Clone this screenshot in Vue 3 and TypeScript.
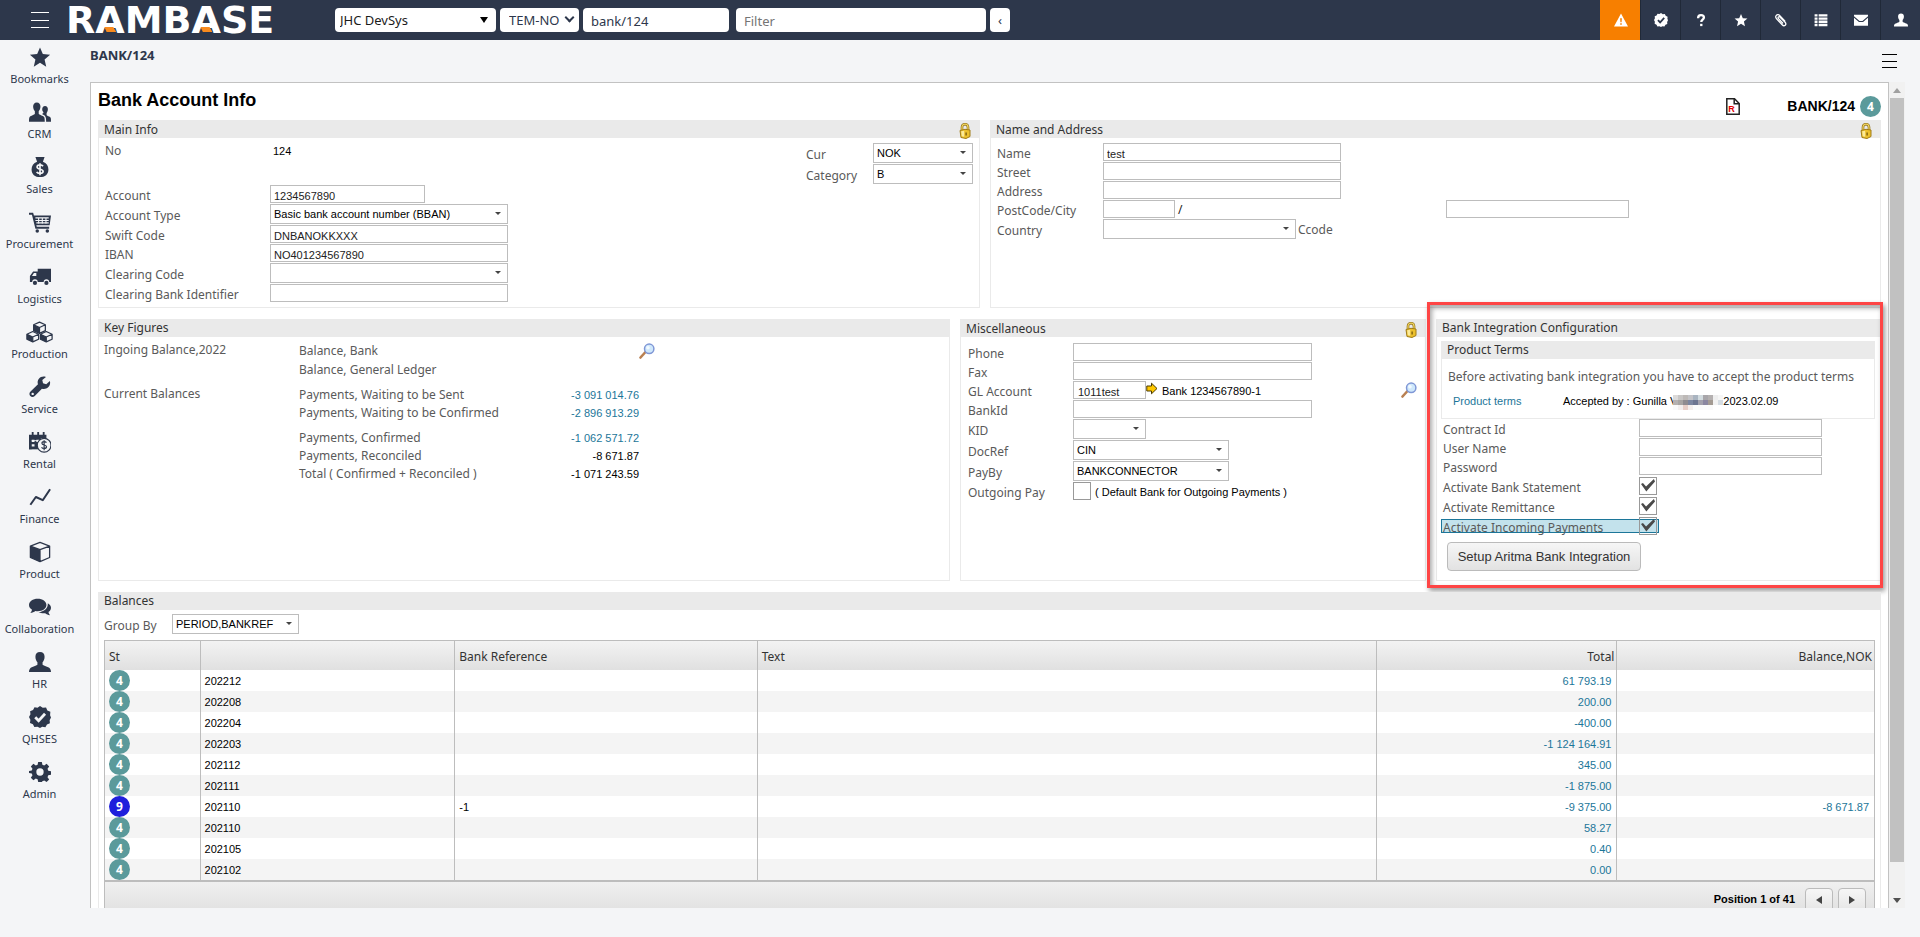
<script setup lang="ts">
import { ref } from 'vue'

interface Field {
  id: string
  label: string
  kind: 'text' | 'select' | 'check'
  value?: string
  size: string
  checked?: boolean
  active?: boolean
}

interface BalanceRow {
  st: number
  period: string
  bankRef?: string
  total: string
  balance?: string
}

const modules: string[] = [
  'Bookmarks', 'CRM', 'Sales', 'Procurement', 'Logistics', 'Production', 'Service',
  'Rental', 'Finance', 'Product', 'Collaboration', 'HR', 'QHSES', 'Admin',
]

const tools: string[] = ['alert', 'verified', 'help', 'star', 'clip', 'list', 'mail', 'user']

const accountFields = ref<Field[]>([
  { id: 'account', label: 'Account', kind: 'text', value: '1234567890', size: 'w155' },
  { id: 'account-type', label: 'Account Type', kind: 'select', value: 'Basic bank account number (BBAN)', size: 'w238' },
  { id: 'swift', label: 'Swift Code', kind: 'text', value: 'DNBANOKKXXX', size: 'w238' },
  { id: 'iban', label: 'IBAN', kind: 'text', value: 'NO401234567890', size: 'w238' },
  { id: 'clearing', label: 'Clearing Code', kind: 'select', value: '', size: 'w238' },
  { id: 'clearing-id', label: 'Clearing Bank Identifier', kind: 'text', value: '', size: 'w238' },
])

const classFields = ref<Field[]>([
  { id: 'cur', label: 'Cur', kind: 'select', value: 'NOK', size: 'w100' },
  { id: 'category', label: 'Category', kind: 'select', value: 'B', size: 'w100' },
])

const addressFields = ref<Field[]>([
  { id: 'name', label: 'Name', kind: 'text', value: 'test', size: 'w238' },
  { id: 'street', label: 'Street', kind: 'text', value: '', size: 'w238' },
  { id: 'address', label: 'Address', kind: 'text', value: '', size: 'w238' },
])

const integrationFields = ref<Field[]>([
  { id: 'contract', label: 'Contract Id', kind: 'text', value: '', size: 'w183' },
  { id: 'user', label: 'User Name', kind: 'text', value: '', size: 'w183' },
  { id: 'password', label: 'Password', kind: 'text', value: '', size: 'w183' },
])

const activations = ref<Field[]>([
  { id: 'statement', label: 'Activate Bank Statement', kind: 'check', size: '', checked: true },
  { id: 'remittance', label: 'Activate Remittance', kind: 'check', size: '', checked: true },
  { id: 'incoming', label: 'Activate Incoming Payments', kind: 'check', size: '', checked: true, active: true },
])

const outgoing = ref(false)

const balances: BalanceRow[] = [
  { st: 4, period: '202212', total: '61 793.19' },
  { st: 4, period: '202208', total: '200.00' },
  { st: 4, period: '202204', total: '-400.00' },
  { st: 4, period: '202203', total: '-1 124 164.91' },
  { st: 4, period: '202112', total: '345.00' },
  { st: 4, period: '202111', total: '-1 875.00' },
  { st: 9, period: '202110', bankRef: '-1', total: '-9 375.00', balance: '-8 671.87' },
  { st: 4, period: '202110', total: '58.27' },
  { st: 4, period: '202105', total: '0.40' },
  { st: 4, period: '202102', total: '0.00' },
]

const mosaic: string[] = [
  '#dcdad9', '#c9c7c6', '#bdb9b7', '#c4c4c8', '#a9b4c0', '#d3dce0', '#a8a6aa', '#b4b0b0', '#eeeeee', '#f6f6f6',
  '#b5b1b0', '#a8a5a3', '#8f8c90', '#7c86a0', '#6d7590', '#a2a0ac', '#8a86a0', '#a39a92', '#f2f2f2', '#d5dce2',
  '#fafafa', '#f3efee', '#e8cfc8', '#f4eeec', '#fbfbfb', '#fafafa', '#fbfbfb', '#fafafa', '#ffffff', '#ffffff',
]
</script>

<template>
  <div class="app">
    <svg class="defs" aria-hidden="true">
      <symbol id="i-star" viewBox="0 0 24 24"><path d="M12 1.5l3.1 7.3 7.9.7-6 5.2 1.8 7.8-6.8-4.1-6.8 4.1L7 14.700 1 9.500l7.900-.7z" /></symbol>
      <symbol id="i-Bookmarks" viewBox="0 0 24 24"><path d="M12 1.500l3.100 7.300 7.900.7-6 5.200 1.800 7.800-6.800-4.100-6.800 4.100L7 14.700 1 9.500l7.900-.7z" /></symbol>
      <symbol id="i-CRM" viewBox="0 0 24 24"><path d="M8.500 1.500c2.600 0 4 1.900 4 4.500 0 2-.8 4-1.900 5.100v2.700c0 1 4.900 2.200 5.900 3.600.5.800.7 2.600.7 5.100H0c0-2.500.1-4.300.7-5.100 1-1.400 5.700-2.600 5.700-3.600v-2.700C5.300 10 4.500 8 4.500 6c0-2.600 1.400-4.500 4-4.500z" /><path d="M17.500 5.500c2 0 3.100 1.500 3.100 3.600 0 1.600-.6 3.100-1.400 4v2.300c0 .9 3.700 1.700 4.400 2.800.4.700.4 2.300.4 4.300h-5.300c0-2.600-.2-4.600-.9-5.700-.8-1.200-2.500-2-3.600-2.600l1.500-1v-.9c-.8-.8-1.300-1.600-1.300-3.200 0-2.100 1.100-3.600 3.100-3.600z" /></symbol>
      <symbol id="i-Sales" viewBox="0 0 24 24"><path d="M7 1h10l-1.800 5.200c4 1.300 6 4.500 6 8.400 0 5.200-3.800 8.400-9.200 8.400s-9.200-3.200-9.200-8.400c0-3.900 2-7.100 6-8.400z" /><path d="M15.300 11.200c-.6-1-1.700-1.500-3.300-1.500-2 0-3.200.8-3.200 2.300 0 3.300 6.600 1.500 6.600 4.700 0 1.500-1.300 2.400-3.400 2.400-1.800 0-3.100-.6-3.600-1.800M12 8v13" class="cut" /></symbol>
      <symbol id="i-Procurement" viewBox="0 0 24 24"><path d="M0 2h4.500l.9 3H24l-1.500 10.500H8l.5 1.800H22v2H7L3.200 4H0z" /><circle cx="9" cy="21.700" r="1.900" /><circle cx="20" cy="21.700" r="1.900" /><path d="M7 7.500h14.500M7 10.300h14.500M8 13h13.500M10.500 7v7M14.500 7v7M18.500 7v7" class="grid-cut" /></symbol>
      <symbol id="i-Logistics" viewBox="0 0 24 24"><path d="M9.500 3H24v14.500h-2a3 3 0 0 0-6 0H9.500a3 3 0 0 0-6 0H1V11l3.500-5h5z" /><circle cx="6.500" cy="18.500" r="2.300" /><circle cx="19" cy="18.500" r="2.300" /><path d="M5.400 7.500H8V11H3.200z" class="hole" /></symbol>
      <symbol id="i-Production" viewBox="0 0 30 24"><g class="box-line"><path d="M15 1l6.500 3v6.500L15 13.500l-6.500-3V4zM8.500 4L15 7l6.500-3M15 7v6.500" /><path d="M7.500 11.500l6.500 3V20l-6.500 3L1 20v-5.500zM1 14.500l6.500 3 6.500-3M7.500 17.500V23" /><path d="M22.500 11.500l6.500 3V20l-6.500 3-6.500-3v-5.500zM16 14.500l6.500 3 6.500-3M22.500 17.500V23" /></g><path d="M8.500 4L15 7v6.500l-6.500-3zM1 14.500l6.500 3V23L1 20zM16 14.500l6.500 3V23L16 20z" /></symbol>
      <symbol id="i-Service" viewBox="0 0 24 24"><path d="M22.800 5.500l-4 3.500-3.500-1.200-.8-3.500 4-3.200c-3-1-6-.2-7.700 1.800-1.500 1.800-1.700 4-1 6.200L1.700 17c-1.600 1.500-1.500 3.500-.3 4.900 1.300 1.400 3.400 1.500 4.900 0l7.800-8.100c2.300.7 5 .3 6.800-1.400 1.900-1.800 2.600-4.400 1.900-6.900z" /><circle cx="4" cy="19.500" r="1.300" class="hole" /></symbol>
      <symbol id="i-Rental" viewBox="0 0 24 24"><path d="M0 4h3V1h2v3h4V1h2v3h4V1h2v3h2v6H0zM0 10h3v10H0z" /><path d="M0 11h12v9H0z" /><path d="M3 9.500h3V12H3zM8 9.500h3V12H8zM3 14.500h3V17H3zM13 7.500h3V9h-3z" class="hole" /><circle cx="16.500" cy="15.500" r="7.500" class="coin" /><path d="M19 12.700c-.5-.8-1.300-1.100-2.500-1.100-1.500 0-2.400.7-2.400 1.800 0 2.500 5 1.300 5 3.800 0 1.200-1 1.900-2.600 1.900-1.400 0-2.400-.5-2.800-1.400M16.500 10v11" class="pen" /></symbol>
      <symbol id="i-Finance" viewBox="0 0 24 24"><path d="M1.500 20.500l6-8.500 7.500 3.500 8-12" class="trend" /></symbol>
      <symbol id="i-Product" viewBox="0 0 24 24"><path d="M12 1.500l10.500 4v12.500L12 22.500 1.500 18V5.500zM1.500 5.500l10.500 4 10.500-4M12 9.500v13" class="box-line" /><path d="M1.500 5.500l10.500 4v13L1.500 18z" /></symbol>
      <symbol id="i-Collaboration" viewBox="0 0 24 24"><path d="M9.500 3C14.800 3 19 6 19 9.800s-4.200 6.800-9.500 6.800c-.9 0-1.700-.1-2.500-.2-1.500 1.200-3.300 1.900-5.600 2 1-.9 1.700-2 1.900-3.300C1.300 13.800 0 11.900 0 9.800 0 6 4.200 3 9.500 3z" /><path d="M20.500 7.800c2.200 1.200 3.500 3 3.500 5 0 1.900-1.100 3.500-2.800 4.600.2 1.300.8 2.600 1.800 3.600-2.200-.2-4-1-5.300-2.200-2.900.3-5.500-.4-7.300-1.300 6-.3 10.600-4.100 10.100-9.700z" /></symbol>
      <symbol id="i-HR" viewBox="0 0 24 24"><path d="M12 1c3.300 0 5 2.200 5 5.200 0 2.500-.9 4.500-2.200 6v2.600c0 1.300 6.500 2.400 8 4.200.7.800 1.200 2 1.200 4H0c0-2 .5-3.200 1.200-4 1.500-1.800 8-2.900 8-4.200v-2.600C7.900 10.700 7 8.700 7 6.200 7 3.200 8.700 1 12 1z" /></symbol>
      <symbol id="i-user" viewBox="0 0 24 24"><path d="M12 1c3.300 0 5 2.200 5 5.200 0 2.500-.9 4.500-2.200 6v2.600c0 1.300 6.500 2.400 8 4.200.7.800 1.200 2 1.200 4H0c0-2 .5-3.200 1.200-4 1.500-1.800 8-2.900 8-4.200v-2.600C7.900 10.700 7 8.700 7 6.200 7 3.200 8.700 1 12 1z" /></symbol>
      <symbol id="i-QHSES" viewBox="0 0 24 24"><path d="M12 0l3 2 3.600-.4 1.400 3.300 3.300 1.400L23 10l1 2.500-1.500 3 .3 3.400-3.200 1.300-1.700 3-3.500-.5L12 24l-2.700-1.400-3.500.4-1.500-3-3.200-1.400.4-3.500L0 12l1.600-3-.4-3.400 3.200-1.300L6 1.400l3.300.5z" /><path d="M6.800 12.200l3.700 3.900 7-7.600" class="tick" /></symbol>
      <symbol id="i-verified" viewBox="0 0 24 24"><path d="M12 0l3 2 3.600-.4 1.400 3.300 3.300 1.400L23 10l1 2.500-1.500 3 .3 3.400-3.200 1.300-1.700 3-3.500-.5L12 24l-2.700-1.400-3.500.4-1.500-3-3.200-1.400.4-3.500L0 12l1.600-3-.4-3.400 3.200-1.300L6 1.400l3.300.5z" /><path d="M6.800 12.200l3.700 3.900 7-7.600" class="tick" /></symbol>
      <symbol id="i-Admin" viewBox="0 0 24 24"><path fill-rule="evenodd" d="M10 1h4l.6 3.100 2 .8 2.600-1.800 2.800 2.800-1.800 2.600.8 2 3 .6v3.900l-3 .6-.8 2 1.800 2.600-2.800 2.800-2.600-1.800-2 .8L14 23h-4l-.6-3-2-.8L4.800 21 2 18.200l1.800-2.600-.8-2-3-.6V11l3-.6.8-2L2 5.900l2.800-2.800 2.600 1.800 2-.8zM12 8a4 4 0 1 0 0 8 4 4 0 0 0 0-8z" /></symbol>
      <symbol id="i-alert" viewBox="0 0 24 24"><path fill-rule="evenodd" d="M12 1l12 22H0zM10.500 9l.5 7h2l.500-7zM10.700 17.500V20h2.600v-2.500z" /></symbol>
      <symbol id="i-help" viewBox="0 0 24 24"><path d="M7 9C7 5 9 3.500 12 3.500c3 0 5 1.500 5 4.300 0 3.700-4.500 3.700-4.500 7.700" class="mark" /><path d="M10.500 18.500h4v4h-4z" /></symbol>
      <symbol id="i-clip" viewBox="0 0 24 24"><path d="M18.500 13.500L10 4.500C8 2.500 5.500 2.300 4 4S2.700 8 4.500 10l9.500 10.200c1.500 1.600 3.800 2 5.200.7s1.200-3.400-.2-5L10.500 7.200c-1-1-2.200-1.200-3-.4s-.6 1.900.3 2.900l7 7.500" class="wire" /></symbol>
      <symbol id="i-list" viewBox="0 0 24 24"><path d="M1 2h5v4H1zM8 2h15v4H8zM1 7.500h5v4H1zM8 7.500h15v4H8zM1 13h5v4H1zM8 13h15v4H8zM1 18.500h5v4H1zM8 18.500h15v4H8z" /></symbol>
      <symbol id="i-mail" viewBox="0 0 24 24"><path d="M0 3h24v2.500l-9.500 8h-5L0 5.500zM0 8l8.500 7.300h7L24 8v14H0z" /></symbol>
      <symbol id="i-lock" viewBox="0 0 12 16"><path d="M3 7.500V4.300C3 2.300 4.200 1.200 6 1.200s3 1.100 3 3.100v3.200" fill="none" stroke="#8a6a14" stroke-width="2.600" /><path d="M3 7.500V4.300C3 2.300 4.200 1.200 6 1.200s3 1.100 3 3.100v3.200" fill="none" stroke="#f0d460" stroke-width="1.300" /><path d="M1 7.500l5-1.200 5 .7v6.500L7 15.500l-5-1z" fill="#ecc02c" stroke="#a07c18" stroke-width="1" /><path d="M2.200 8.300l3-.6v6l-2.500-.5z" fill="#fbea9a" /><path d="M6.500 9.500h1.200v3H6.500z" fill="#6b4f0c" /></symbol>
      <symbol id="i-search" viewBox="0 0 16 16"><path d="M1.500 14.500l5-5.500" stroke="#b98052" stroke-width="2.600" stroke-linecap="round" /><circle cx="10.200" cy="5.800" r="4.700" fill="#cfe8fb" stroke="#7f97d6" stroke-width="1.500" /><circle cx="9" cy="4.700" r="1.800" fill="#f2faff" /></symbol>
      <symbol id="i-report" viewBox="0 0 14 17"><path d="M.8.8h7.700l4.700 4.700v10.700H.8z" fill="#fff" stroke="#222" stroke-width="1.500" /><path d="M8.200.8v5h5" fill="none" stroke="#222" stroke-width="1.500" /></symbol>
      <symbol id="i-arrow" viewBox="0 0 12 13"><path d="M.8 4h4.700V1.200l5.500 5.300-5.500 5.300V9H.8z" fill="#ffc800" stroke="#4a3a00" stroke-width="1" /></symbol>
    </svg>

    <header class="topbar">
      <button class="burger" type="button" aria-label="Menu"><i></i><i></i><i></i></button>
      <a class="logo" href="#" aria-label="RamBase">R<span class="accent">A</span>MB<span class="accent">A</span>SE</a>
      <div class="query">
        <span class="pick solid"><select aria-label="System"><option>JHC DevSys</option></select></span>
        <span class="pick chevron"><select aria-label="Company"><option>TEM-NO</option></select></span>
        <input class="path" type="text" value="bank/124" aria-label="Target">
        <input class="filter" type="text" placeholder="Filter" aria-label="Filter">
        <button class="collapse" type="button" aria-label="Collapse">‹</button>
      </div>
      <nav class="tools">
        <button v-for="t in tools" :key="t" type="button" :class="{ hot: t === 'alert' }" :aria-label="t">
          <svg><use :href="'#i-' + t" /></svg>
        </button>
      </nav>
    </header>

    <div class="below">
      <nav class="side">
        <a v-for="m in modules" :key="m" href="#">
          <svg :class="{ wide: m === 'Production' }"><use :href="'#i-' + m" /></svg>
          <span>{{ m }}</span>
        </a>
      </nav>

      <div class="work">
        <div class="crumbs">
          <strong>BANK/124</strong>
          <button class="burger dark" type="button" aria-label="Page menu"><i></i><i></i><i></i></button>
        </div>

        <div class="viewport">
          <main class="frame">
            <div class="title-row">
              <h1>Bank Account Info</h1>
              <button class="report" type="button" aria-label="Report"><svg><use href="#i-report" /></svg><b>R</b></button>
              <strong>BANK/124</strong>
              <span class="badge">4</span>
            </div>

            <div class="cards upper">
              <section class="card main-info">
                <h2>Main Info<svg class="lock"><use href="#i-lock" /></svg></h2>
                <div class="body split">
                  <div class="form">
                    <div class="static"><span class="lbl">No</span><span class="val">124</span></div>
                    <div v-for="f in accountFields" :key="f.id" class="row">
                      <label :for="f.id">{{ f.label }}</label>
                      <input v-if="f.kind === 'text'" :id="f.id" v-model="f.value" type="text" :class="f.size">
                      <span v-else class="pick" :class="f.size"><select :id="f.id"><option>{{ f.value }}</option></select></span>
                    </div>
                  </div>
                  <div class="form class-form">
                    <div v-for="f in classFields" :key="f.id" class="row">
                      <label :for="f.id">{{ f.label }}</label>
                      <span class="pick" :class="f.size"><select :id="f.id"><option>{{ f.value }}</option></select></span>
                    </div>
                  </div>
                </div>
              </section>

              <section class="card name-info">
                <h2>Name and Address<svg class="lock"><use href="#i-lock" /></svg></h2>
                <div class="body form narrow">
                  <div v-for="f in addressFields" :key="f.id" class="row">
                    <label :for="f.id">{{ f.label }}</label>
                    <input :id="f.id" v-model="f.value" type="text" :class="f.size">
                  </div>
                  <div class="row">
                    <label for="postcode">PostCode/City</label>
                    <input id="postcode" type="text" class="w72">
                    <span class="slash">/</span>
                    <input id="city" type="text" class="w183" aria-label="City">
                  </div>
                  <div class="row">
                    <label for="country">Country</label>
                    <span class="pick w193"><select id="country"><option></option></select></span>
                    <span class="ccode">Ccode</span>
                  </div>
                </div>
              </section>
            </div>

            <div class="cards middle">
              <section class="card key-info">
                <h2>Key Figures</h2>
                <div class="body figures">
                  <span class="group">Ingoing Balance,2022</span>
                  <dl>
                    <div><dt>Balance, Bank</dt><dd></dd></div>
                    <div><dt>Balance, General Ledger</dt><dd></dd></div>
                  </dl>
                  <button class="lens" type="button" aria-label="Look up"><svg><use href="#i-search" /></svg></button>
                  <span class="group">Current Balances</span>
                  <dl class="tight">
                    <div><dt>Payments, Waiting to be Sent</dt><dd><a href="#">-3 091 014.76</a></dd></div>
                    <div class="parted"><dt>Payments, Waiting to be Confirmed</dt><dd><a href="#">-2 896 913.29</a></dd></div>
                    <div><dt>Payments, Confirmed</dt><dd><a href="#">-1 062 571.72</a></dd></div>
                    <div><dt>Payments, Reconciled</dt><dd>-8 671.87</dd></div>
                    <div><dt>Total ( Confirmed + Reconciled )</dt><dd>-1 071 243.59</dd></div>
                  </dl>
                </div>
              </section>

              <section class="card misc-info">
                <h2>Miscellaneous<svg class="lock"><use href="#i-lock" /></svg></h2>
                <div class="body form narrow">
                  <div class="row"><label for="phone">Phone</label><input id="phone" type="text" class="w239"></div>
                  <div class="row"><label for="fax">Fax</label><input id="fax" type="text" class="w239"></div>
                  <div class="row">
                    <label for="gl">GL Account</label>
                    <input id="gl" type="text" value="1011test" class="w73">
                    <svg class="goto"><use href="#i-arrow" /></svg>
                    <span class="note">Bank 1234567890-1</span>
                    <button class="lens end" type="button" aria-label="Look up account"><svg><use href="#i-search" /></svg></button>
                  </div>
                  <div class="row"><label for="bankid">BankId</label><input id="bankid" type="text" class="w239"></div>
                  <div class="row"><label for="kid">KID</label><span class="pick w73"><select id="kid"><option></option></select></span></div>
                  <div class="row"><label for="docref">DocRef</label><span class="pick w156"><select id="docref"><option>CIN</option></select></span></div>
                  <div class="row"><label for="payby">PayBy</label><span class="pick w156"><select id="payby"><option>BANKCONNECTOR</option></select></span></div>
                  <div class="row">
                    <label for="outgoing">Outgoing Pay</label>
                    <input id="outgoing" v-model="outgoing" type="checkbox">
                    <span class="note">( Default Bank for Outgoing Payments )</span>
                  </div>
                </div>
              </section>

              <section class="card bank-info">
                <h2>Bank Integration Configuration</h2>
                <div class="body integration">
                  <section class="card terms">
                    <h2>Product Terms</h2>
                    <div class="body">
                      <p>Before activating bank integration you have to accept the product terms</p>
                      <div class="accept">
                        <a href="#">Product terms</a>
                        <span>Accepted by : Gunilla V</span>
                        <span class="mosaic"><i v-for="(c, n) in mosaic" :key="n" :style="{ background: c }"></i></span>
                        <span>2023.02.09</span>
                      </div>
                    </div>
                  </section>
                  <div class="form">
                    <div v-for="f in integrationFields" :key="f.id" class="row">
                      <label :for="f.id">{{ f.label }}</label>
                      <input :id="f.id" v-model="f.value" type="text" :class="f.size">
                    </div>
                    <div v-for="f in activations" :key="f.id" class="row check-row" :class="{ active: f.active }">
                      <label :for="f.id">{{ f.label }}</label>
                      <input :id="f.id" v-model="f.checked" type="checkbox">
                    </div>
                  </div>
                  <button class="setup" type="button">Setup Aritma Bank Integration</button>
                </div>
              </section>
            </div>

            <section class="card balances">
              <h2>Balances</h2>
              <div class="body">
                <div class="group-by">
                  <label for="group">Group By</label>
                  <span class="pick w127"><select id="group"><option>PERIOD,BANKREF</option></select></span>
                </div>
                <table>
                  <colgroup>
                    <col class="c-st"><col class="c-period"><col class="c-ref"><col class="c-text"><col class="c-total"><col class="c-balance">
                  </colgroup>
                  <thead>
                    <tr><th>St</th><th></th><th>Bank Reference</th><th>Text</th><th class="num">Total</th><th class="num">Balance,NOK</th></tr>
                  </thead>
                  <tbody>
                    <tr v-for="(r, n) in balances" :key="n">
                      <td class="st"><span class="badge" :class="{ blue: r.st === 9 }">{{ r.st }}</span></td>
                      <td>{{ r.period }}</td>
                      <td>{{ r.bankRef }}</td>
                      <td></td>
                      <td class="num"><a href="#">{{ r.total }}</a></td>
                      <td class="num"><a v-if="r.balance" href="#">{{ r.balance }}</a></td>
                    </tr>
                  </tbody>
                </table>
                <div class="pager">
                  <strong>Position 1 of 41</strong>
                  <button type="button" aria-label="Previous"><i class="prev"></i></button>
                  <button type="button" aria-label="Next"><i class="next"></i></button>
                </div>
              </div>
            </section>
          </main>
          <div class="scroll" aria-hidden="true"><i class="up"></i><span></span><i class="down"></i></div>
        </div>
      </div>
    </div>
  </div>
</template>

<style>
body {
  background: #f4f5f7;
  overflow: hidden;
}
</style>

<style scoped>
.app {
  --back: #f4f5f7;
  height: 100vh;
  display: flex;
  flex-direction: column;
  background: #f4f5f7;
  color: #2d374b;
  font-family: "Noto Sans", "Open Sans", sans-serif;
  font-size: 12px;
}
.app *, .app *::before, .app *::after { box-sizing: border-box; }
.defs { display: none; }
button, input, select { font: inherit; color: inherit; margin: 0; padding: 0; border: 0; border-radius: 0; background: none; outline: 0; }
a { color: #1c7699; text-decoration: none; }
svg { display: block; fill: currentColor; }

/* Icon strokes */
.cut { fill: none; stroke: var(--back); stroke-width: 1.8; }
.grid-cut { fill: none; stroke: var(--back); stroke-width: 1.2; }
.hole { fill: var(--back); }
.box-line { fill: none; stroke: currentColor; stroke-width: 1.4; stroke-linejoin: round; }
.coin { fill: var(--back); stroke: currentColor; stroke-width: 1.3; }
.pen { fill: none; stroke: currentColor; stroke-width: 1.3; }
.trend { fill: none; stroke: currentColor; stroke-width: 2.2; stroke-linejoin: round; }
.tick { fill: none; stroke: var(--back); stroke-width: 3; }
.mark { fill: none; stroke: currentColor; stroke-width: 4; }
.wire { fill: none; stroke: currentColor; stroke-width: 2.2; stroke-linecap: round; }

/* Top bar */
.topbar { --back: #2d374b; flex: none; height: 40px; display: flex; align-items: center; background: #2d374b; color: #fff; }
.burger { width: 18px; height: 16px; display: flex; flex-direction: column; justify-content: space-between; margin-left: 31px; }
.burger i { display: block; height: 1px; background: currentColor; }
.burger.dark { color: #000; width: 15px; height: 14px; margin: 14px 15px 0 auto; }
.logo { flex: none; width: 286px; padding-left: 17px; color: #fff; font: bold 38px/40px "DejaVu Sans", sans-serif; }
.accent { position: relative; }
.accent::after { content: ""; position: absolute; left: 9px; bottom: 10px; width: 12px; height: 5px; background: #f98b1e; clip-path: polygon(0 0, 75% 0, 100% 100%, 20% 100%); }
.query { display: flex; gap: 4px; font-size: 13px; color: #2d374b; }
.query input, .query select, .collapse { height: 24px; background: #fff; border-radius: 4px; }
.query select { font-size: 13px; padding-left: 5px; color: #1b1b1b; }
.query .solid { width: 161px; height: 24px; }
.query .chevron { width: 79px; height: 24px; }
.query .chevron select { padding-left: 9px; color: #2d374b; }
.query input { padding: 2px 8px 0; }
.path { width: 146px; }
.filter { width: 250px; margin-left: 3px; }
.filter::placeholder { color: #757575; opacity: 1; }
.collapse { width: 20px; line-height: 22px; }
.tools { display: flex; margin-left: auto; }
.tools button { width: 40px; height: 40px; border-left: 1px solid #202938; display: flex; align-items: center; justify-content: center; }
.tools svg { width: 14px; height: 14px; }
.tools .hot { background: #f77f00; border-color: #f77f00; }

/* Sidebar */
.below { flex: 1; display: flex; min-height: 0; }
.side { width: 79px; flex: none; font-size: 11px; }
.side a { height: 55px; display: flex; flex-direction: column; align-items: center; padding-top: 6px; color: #2d374b; }
.side svg { width: 22px; height: 22px; }
.side svg.wide { width: 27px; }
.side span { line-height: 18px; margin-top: 2px; }

/* Work area */
.work { flex: 1; min-width: 0; display: flex; flex-direction: column; padding: 0 8px 29px 11px; }
.crumbs { height: 42px; flex: none; display: flex; align-items: flex-start; }
.crumbs strong { font-size: 13px; line-height: 18px; margin-top: 6px; }
.viewport { flex: 1; min-height: 0; display: flex; margin-right: 7px; }
.frame { flex: 1; min-width: 0; overflow: hidden; background: #fff; border: 1px solid #c2c2c2; border-bottom: 0; padding: 0 7px; }
.scroll { width: 16px; background: #f1f1f1; display: flex; flex-direction: column; align-items: center; padding: 6px 0 5px; }
.scroll span { width: 14px; flex: 1; background: #c1c1c1; margin: 5px 0 36px; }
.scroll i { border: 4px solid transparent; }
.scroll .up { border-top: 0; border-bottom: 5px solid #a0a0a0; }
.scroll .down { border-bottom: 0; border-top: 5px solid #505050; }

.title-row { height: 37px; display: flex; align-items: center; color: #000; font-family: "Liberation Sans", Arial, sans-serif; }
h1 { font-size: 18px; line-height: 20px; margin: 0 auto 4px 0; }
.title-row strong { font-size: 14px; margin: 8px 5px 0 47px; }
.title-row .badge { margin-top: 9px; }
.report { position: relative; width: 14px; height: 17px; margin-top: 9px; }
.report svg { width: 14px; height: 17px; }
.report b { position: absolute; left: 2px; bottom: 1px; color: #e00000; font-size: 9px; line-height: 9px; }
.badge { width: 21px; height: 21px; border-radius: 50%; background: #5b9a9b; color: #fff; font: bold 12px/21px "Noto Sans", sans-serif; text-align: center; display: block; }
.badge.blue { background: #1f1fdc; }

/* Cards */
.cards { display: flex; gap: 10px; margin-bottom: 11px; }
.upper { min-height: 188px; }
.middle { min-height: 262px; }
.card { display: flex; flex-direction: column; min-width: 0; }
.main-info { flex: 882; }
.name-info { flex: 891; }
.key-info { flex: 852; }
.misc-info { flex: 466; }
.bank-info { flex: 445; }
.main-info, .name-info, .key-info, .misc-info, .bank-info { flex-basis: 0; }
h2 { position: relative; margin: 0; height: 18px; padding-left: 6px; background: #eaeaea; font-size: 12px; font-weight: 400; line-height: 18px; color: #333; }
.upper h2, .misc-info h2 { line-height: 20px; }
.lock { position: absolute; right: 9px; top: 3px; width: 12px; height: 16px; }
.body { flex: 1; border: 1px solid #eaeaea; border-top: 0; color: #5a5a5a; }
.form { padding: 5px 0 0 6px; display: flex; flex-direction: column; gap: 1px; }
.split { display: flex; justify-content: space-between; }
.class-form { padding-right: 6px; }
.row { display: flex; align-items: center; }
.row label { width: 165px; line-height: 16px; padding-top: 3px; height: 18px; white-space: nowrap; flex: none; }
.class-form label { width: 67px; }
.narrow label { width: 106px; }
.misc-info .form { padding: 6px 0 0 7px; }
.misc-info .narrow label { width: 105px; }
.static { display: flex; height: 18px; margin-bottom: 23px; line-height: 16px; }
.lbl { width: 168px; }
.val { font: 11px/16px "Liberation Sans", Arial, sans-serif; color: #000; }
.row input[type="text"] { height: 18px; border: 1px solid #bdbdbd; padding: 3px 3px 0; color: #222; font: 11px/13px "Liberation Sans", Arial, sans-serif; background: #fff; }
.row #gl { padding-left: 4px; }
.pick { position: relative; display: block; height: 20px; }
.pick select { appearance: none; width: 100%; height: 100%; }
.row .pick select, .group-by select { border: 1px solid #bdbdbd; background: #fff; padding: 0 3px; color: #000; font: 11px/15px "Liberation Sans", Arial, sans-serif; }
.pick::after { content: ""; position: absolute; right: 7px; top: 8px; border: 3px solid transparent; border-top: 3px solid #444; border-bottom: 0; pointer-events: none; }
.pick.solid::after { right: 8px; top: 9px; border-width: 6px 4px 0; border-top-color: #000; }
.pick.chevron::after { right: 6px; top: 6px; width: 7px; height: 7px; border: 0; border-right: 2px solid #2d374b; border-bottom: 2px solid #2d374b; transform: rotate(45deg); }
.w72 { width: 72px; }
.w73 { width: 73px; }
.w100 { width: 100px; }
.w127 { width: 127px; }
.w155 { width: 155px; }
.w156 { width: 156px; }
.w183 { width: 183px; }
.w193 { width: 193px; }
.w238 { width: 238px; }
.w239 { width: 239px; }
.slash { width: 271px; padding-left: 3px; color: #222; }
.ccode { padding: 2px 0 0 2px; line-height: 16px; }
.note { font: 11px/16px "Liberation Sans", Arial, sans-serif; color: #000; padding: 1px 0 0 4px; white-space: nowrap; }
.goto { width: 12px; height: 13px; margin-bottom: 3px; }
.row input[type="checkbox"], .row input[type="checkbox"]::before { display: block; }
input[type="checkbox"] { appearance: none; width: 18px; height: 18px; border: 1px solid #999; }
input[type="checkbox"]:checked::before { content: ""; width: 14px; height: 13px; margin: 1px; background: #4a4a4a; clip-path: polygon(0 42%, 14% 34%, 36% 62%, 92% 4%, 100% 24%, 38% 100%); }
.lens { width: 16px; height: 16px; }
.lens svg { width: 16px; height: 16px; }
.lens.end { margin: 0 8px 0 auto; }

/* Key figures */
.figures { display: grid; grid-template-columns: 195px 340px 16px; align-content: start; row-gap: 6px; padding: 5px 0 0 5px; }
.group { line-height: 16px; }
.figures .lens { margin-top: 1px; }
dl { margin: 0; }
dl div { display: flex; justify-content: space-between; height: 19px; line-height: 18px; }
.tight div { height: 18px; }
.tight .parted { height: 25px; }
dd { margin: 0; font: 11px/18px "Liberation Sans", Arial, sans-serif; color: #000; }

/* Bank integration */
.bank-info { position: relative; }
.bank-info::after { content: ""; position: absolute; inset: -17px -2px -7px -9px; border: 3px solid #fe4545; box-shadow: 2px 3px 5px rgba(0, 0, 0, .4), inset 2px 3px 5px rgba(0, 0, 0, .35); pointer-events: none; }
.integration { padding: 4px 5px 0 4px; }
.terms .body { min-height: 60px; padding: 9px 0 0 6px; }
.terms p { margin: 0; line-height: 18px; white-space: nowrap; }
.accept { display: flex; align-items: center; height: 16px; margin-top: 7px; font: 11px/16px "Liberation Sans", Arial, sans-serif; color: #000; white-space: nowrap; }
.accept a { width: 115px; padding-left: 5px; }
.mosaic { display: grid; grid-template-columns: repeat(10, 5px); grid-auto-rows: 5px; margin: 2px 0 0 -4px; position: relative; }
.integration .form { padding: 0 0 0 2px; }
.integration label { width: 196px; }
.check-row { height: 19px; width: 215px; }
.check-row.active { position: relative; }
.check-row.active::before { content: ""; position: absolute; inset: 3px -1px 2px -2px; background: #c3e2ec; border: 1px solid #1c7699; }
.check-row > * { position: relative; }
.setup { height: 29px; width: 194px; margin: 7px 0 0 6px; border: 1px solid #bbb; border-radius: 4px; background: linear-gradient(#f6f6f6, #e2e2e2); font: 13px/20px "Liberation Sans", Arial, sans-serif; color: #333; }

/* Balances */
.balances > .body { padding: 4px 5px 0; }
.group-by { display: flex; align-items: center; padding-bottom: 6px; }
.group-by label { width: 68px; padding-top: 2px; }
table { width: 100%; table-layout: fixed; border-collapse: separate; border-spacing: 0; border: 1px solid #bdbdbd; border-bottom-width: 2px; color: #000; font: 11px/15px "Liberation Sans", Arial, sans-serif; }
.c-st { width: 5.4%; }
.c-period { width: 14.4%; }
.c-ref { width: 17.1%; }
.c-text { width: 35%; }
.c-total { width: 13.6%; }
.c-balance { width: 14.5%; }
th { height: 29px; padding: 3px 4px 0; background: linear-gradient(#f3f3f3, #e0e0e0); font: 12px/16px "Noto Sans", sans-serif; color: #333; text-align: left; }
th, td { border-right: 1px solid #bdbdbd; }
th:last-child, td:last-child { border-right: 0; }
td { height: 21px; padding: 2px 4px 0; }
td.st { padding: 0 0 0 4px; }
tr:nth-child(even) td { background: #f4f4f4; }
.num { text-align: right; }
td.num { padding-right: 5px; }
th.num { padding-right: 2px; }
.pager { height: 40px; display: flex; align-items: flex-start; gap: 5px; padding: 6px 8px 0; border: 1px solid #bdbdbd; border-top: 0; background: linear-gradient(#f0f0f0, #dcdcdc); color: #000; font: 11px/22px "Liberation Sans", Arial, sans-serif; }
.pager strong { margin: 0 5px 0 auto; }
.pager button { width: 28px; height: 26px; border: 1px solid #bbb; border-radius: 4px; background: linear-gradient(#f6f6f6, #e4e4e4); display: flex; justify-content: center; padding-top: 7px; }
.pager i { border: 4px solid transparent; height: 0; }
.pager .prev { border-left-width: 0; border-right: 6px solid #444; }
.pager .next { border-right-width: 0; border-left: 6px solid #444; }
</style>
